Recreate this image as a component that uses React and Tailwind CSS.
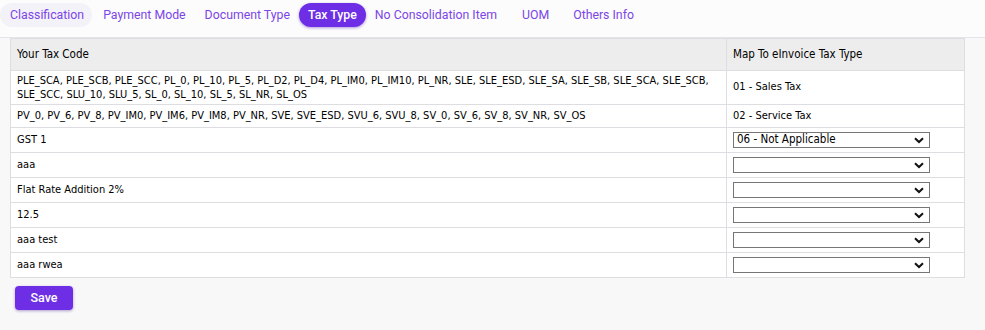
import React from 'react';

const tabs = [
  { label: 'Classification', cls: 'pl-[10px] pr-[8px] rounded-full bg-[#f3f2f9] text-[#7b45e8]' },
  { label: 'Payment Mode', cls: 'pl-[11px] pr-[9px] text-[#7b45e8]' },
  { label: 'Document Type', cls: 'pl-[10px] pr-[8px] text-[#7b45e8]' },
  { label: 'Tax Type', cls: 'ml-[1px] px-[9px] rounded-full bg-[#6d2ee6] text-white font-medium shadow-[0_1px_3px_rgba(80,30,180,0.45)]' },
  { label: 'No Consolidation Item', cls: 'pl-[9px] pr-[12px] text-[#7b45e8]' },
  { label: 'UOM', cls: 'pl-[13px] pr-[12px] text-[#7b45e8]' },
  { label: 'Others Info', cls: 'px-[12px] text-[#7b45e8]' },
];

const rows = [
  { code: 'PLE_SCA, PLE_SCB, PLE_SCC, PL_0, PL_10, PL_5, PL_D2, PL_D4, PL_IM0, PL_IM10, PL_NR, SLE, SLE_ESD, SLE_SA, SLE_SB, SLE_SCA, SLE_SCB, SLE_SCC, SLU_10, SLU_5, SL_0, SL_10, SL_5, SL_NR, SL_OS', text: '01 - Sales Tax' },
  { code: 'PV_0, PV_6, PV_8, PV_IM0, PV_IM6, PV_IM8, PV_NR, SVE, SVE_ESD, SVU_6, SVU_8, SV_0, SV_6, SV_8, SV_NR, SV_OS', text: '02 - Service Tax' },
  { code: 'GST 1', select: '06 - Not Applicable' },
  { code: 'aaa', select: '' },
  { code: 'Flat Rate Addition 2%', select: '' },
  { code: '12.5', select: '' },
  { code: 'aaa test', select: '' },
  { code: 'aaa rwea', select: '' },
];

// Plain select box with a chevron drawn on the right
function TaxSelect({ value }) {
  return (
    <div className="relative w-[197px] h-[16px] border border-[#767676] bg-white flex items-center px-[3px] text-[11.5px] text-black">
      <span className="leading-none">{value}</span>
      <svg className="absolute right-[5px] top-[4px]" width="10" height="7" viewBox="0 0 10 7">
        <path d="M1 1.2 L5 5 L9 1.2" fill="none" stroke="#111" strokeWidth="2" />
      </svg>
    </div>
  );
}

export default function App() {
  return (
    <div className="w-[985px] h-[330px] bg-[#f8f8f9] overflow-hidden">
      {/* Tab strip */}
      <div className="h-[38px] bg-[#fcfcfc] border-b border-[#e4e4ea] flex items-start pt-[3px] text-[12.3px] font-['Roboto',sans-serif]">
        {tabs.map((t) => (
          <div key={t.label} className={'h-[24px] flex items-center ' + t.cls}>
            {t.label}
          </div>
        ))}
      </div>

      {/* Mapping table */}
      <div className="px-[10px] font-['DejaVu_Sans_Condensed','DejaVu_Sans',sans-serif] text-[11px] text-black">
        <table className="w-[954px] border-collapse bg-white table-fixed">
          <colgroup>
            <col className="w-[716px]" />
            <col className="w-[238px]" />
          </colgroup>
          <thead>
            <tr className="h-[32px] bg-[#ededed] text-[11.5px]">
              <th className="border border-[#dedee2] text-left font-normal px-[6px]">Your Tax Code</th>
              <th className="border border-[#dedee2] text-left font-normal px-[6px]">Map To eInvoice Tax Type</th>
            </tr>
          </thead>
          <tbody>
            {rows.map((r, i) => (
              <tr key={i} className={i === 0 ? 'h-[34px]' : i === 1 ? 'h-[23px]' : 'h-[25px]'}>
                <td className="border border-[#dedee2] px-[6px] leading-[14px] align-middle">{r.code}</td>
                <td className="border border-[#dedee2] px-[6px] align-middle">
                  {r.text !== undefined ? r.text : <TaxSelect value={r.select} />}
                </td>
              </tr>
            ))}
          </tbody>
        </table>
        <button className="mt-[8px] ml-[5px] w-[58px] h-[24px] rounded-[4px] bg-[#6d2ee6] text-white text-[12.5px] font-medium font-['Roboto',sans-serif] shadow-[0_1px_3px_rgba(60,20,140,0.4)]">
          Save
        </button>
      </div>
    </div>
  );
}
